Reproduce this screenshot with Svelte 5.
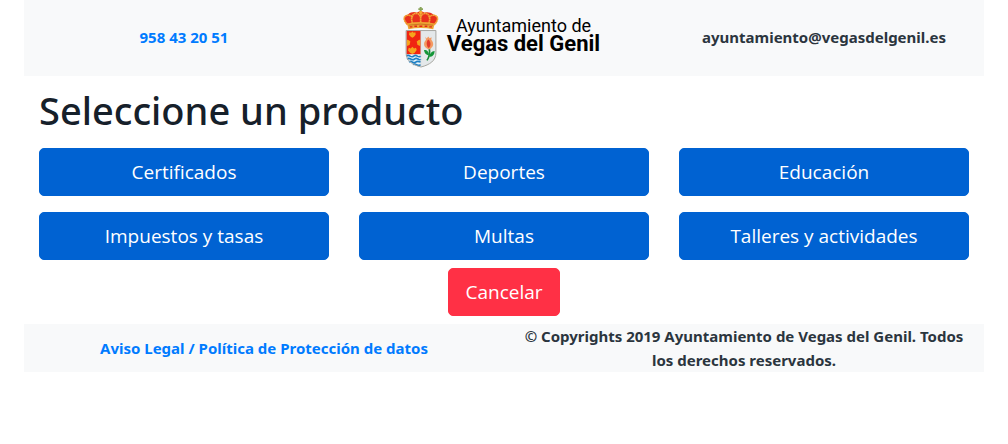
<script>
  const products = [
    'Certificados',
    'Deportes',
    'Educación',
    'Impuestos y tasas',
    'Multas',
    'Talleres y actividades'
  ];
  const phone = '958 43 20 51';
  const email = 'ayuntamiento@vegasdelgenil.es';
</script>

<div class="container">
  <header class="bar header">
    <div><a href="tel:958432051">{phone}</a></div>
    <div class="logo">
      <svg class="crest" viewBox="38 20 108 184" aria-hidden="true">
        <!-- crown -->
        <path d="M88 20h6v4h4v5h-4v6h-6v-6h-4v-5h4z" fill="#8aa55a" />
        <path d="M50 74C36 58 38 46 52 43c10-8 20-9 27-6 6-5 18-5 24 0 8-3 18-1 27 6 14 4 16 16 3 31z" fill="#e8301c" />
        <g fill="none" stroke="#f2a634" stroke-width="5" stroke-dasharray="5 1">
          <path d="M52 74C38 60 38 48 50 45c8-1 14 2 17 6" />
          <path d="M69 74C58 55 66 39 77 39c7 0 10 4 14 10" />
          <path d="M91 36v38" />
          <path d="M113 74c11-19 3-35-8-35-7 0-10 4-14 10" />
          <path d="M131 74c14-14 14-26 2-29-8-1-14 2-17 6" />
        </g>
        <circle cx="91" cy="36" r="5" fill="#f4b030" />
        <path d="M50 70q41-9 83 0l-4 17q-38-8-75 0z" fill="#eda433" />
        <path d="M55 75q36-7 73 0" fill="none" stroke="#b85c1a" stroke-width="2" />
        <path d="M58 80h8m6-2h8m7 0h9m7 0h8m6 2h8" stroke="#e32618" stroke-width="4" />
        <!-- shield -->
        <path d="M47 91h90v67c0 24-18 36-45 43-27-7-45-19-45-43z" fill="#e4e8ea" />
        <path d="M48 91h43v72H48z" fill="#f02512" />
        <path d="M48 163h43v37c-23-7-41-17-43-37z" fill="#e9f5fb" />
        <g fill="#f5a51d">
          <path d="M57 96l5 2 4-4 4 4 5-2 1 7-5 7-5 3-5-3-5-6z" />
          <path d="M49 118l6 2 5 4-2 8-4 4-5 2z" />
          <path d="M90 118l-6 2-5 4 2 8 4 4 5 2z" />
          <path d="M55 143l6 2 5-5 5 5 6-2 2 7-6 8-7 4-7-4-6-7z" />
        </g>
        <g fill="none" stroke="#1d80c5" stroke-width="5">
          <path d="M48 168q5-4 11 0t11 0 11 0 10 0" />
          <path d="M50 177q5-4 11 0t11 0 11 0 8 0" />
          <path d="M56 186q5-4 10 0t10 0 15 0" />
          <path d="M68 194q5-4 10 0t13 0" />
        </g>
        <!-- pomegranate -->
        <path d="M117 144c2 14 1 26-7 37" fill="none" stroke="#168d37" stroke-width="5" />
        <path d="M116 166c-9-1-14-7-15-16 11 0 15 6 15 16zm1 5c1-11 7-17 16-18 0 11-6 18-16 18z" fill="#149638" />
        <path d="M105 110l4 5 5-6 4 5 6-3-1 8c9 10 8 22-6 29-17-4-20-18-10-29z" fill="#f39a62" />
        <path d="M114 118c8 6 9 20 1 26-7-6-8-20-1-26z" fill="#e33a2b" />
        <path d="M47 91h90v67c0 24-18 36-45 43-27-7-45-19-45-43z" fill="none" stroke="#a6a6a0" stroke-width="3" />
        <path d="M91 92v108" stroke="#b9bbb8" stroke-width="1" />
      </svg>
      <div class="name">
        <span>Ayuntamiento de</span>
        <strong>Vegas del Genil</strong>
      </div>
    </div>
    <div>{email}</div>
  </header>

  <main>
    <h1>Seleccione un producto</h1>
    <div class="products">
      {#each products as product}
        <button type="button" class="btn btn-primary">{product}</button>
      {/each}
    </div>
    <div class="actions">
      <button type="button" class="btn btn-danger">Cancelar</button>
    </div>
  </main>

  <footer class="bar footer">
    <div><a href="#legal">Aviso Legal / Política de Protección de datos</a></div>
    <div>© Copyrights 2019 Ayuntamiento de Vegas del Genil. Todos los derechos reservados.</div>
  </footer>
</div>

<style>
  :global(body) {
    margin: 0;
    background: #fff;
  }
  .container {
    max-width: 960px;
    margin: 0 auto;
    font-family: 'Noto Sans', 'Open Sans', sans-serif;
    font-size: 16px;
    line-height: 24px;
    color: #212529;
  }
  .bar {
    display: grid;
    align-items: center;
    background: #f8f9fa;
    font-size: 15px;
    font-weight: 700;
    text-align: center;
    color: #2b353e;
  }
  .bar > div {
    padding: 0 15px;
  }
  .header {
    grid-template-columns: repeat(3, 1fr);
    min-height: 74px;
    padding-bottom: 2px;
  }
  .footer {
    grid-template-columns: repeat(2, 1fr);
  }
  a {
    color: #007bff;
    text-decoration: none;
  }
  .bar > .logo {
    display: flex;
    align-items: center;
    justify-content: center;
    gap: 8px;
    padding-right: 20px;
  }
  .crest {
    width: 36px;
    height: 61px;
  }
  .name {
    display: flex;
    flex-direction: column;
    align-items: center;
    padding-bottom: 4px;
    font-family: Roboto, sans-serif;
    font-weight: 400;
    font-size: 18px;
    line-height: 18px;
    color: #000;
    white-space: nowrap;
  }
  .name strong {
    font-size: 22px;
    font-weight: 700;
  }
  main {
    padding: 10px 15px 8px;
  }
  h1 {
    margin: 0 0 14px;
    font-size: 38px;
    font-weight: 500;
    line-height: 48px;
    color: #16202a;
  }
  .products {
    display: grid;
    grid-template-columns: repeat(3, 1fr);
    gap: 16px 30px;
  }
  .actions {
    margin-top: 8px;
    text-align: center;
  }
  .btn {
    display: inline-block;
    padding: 8px 16px;
    border: 1px solid transparent;
    border-radius: 5px;
    font-family: 'Open Sans', sans-serif;
    font-size: 19px;
    line-height: 30px;
    color: #fff;
    vertical-align: top;
    cursor: pointer;
  }
  .btn-primary {
    background: #0062d2;
    border-color: #0062d2;
  }
  .btn-danger {
    background: #ff3045;
    border-color: #ff3045;
  }
  @media (max-width: 700px) {
    .header,
    .footer,
    .products {
      grid-template-columns: 1fr;
    }
  }
</style>
